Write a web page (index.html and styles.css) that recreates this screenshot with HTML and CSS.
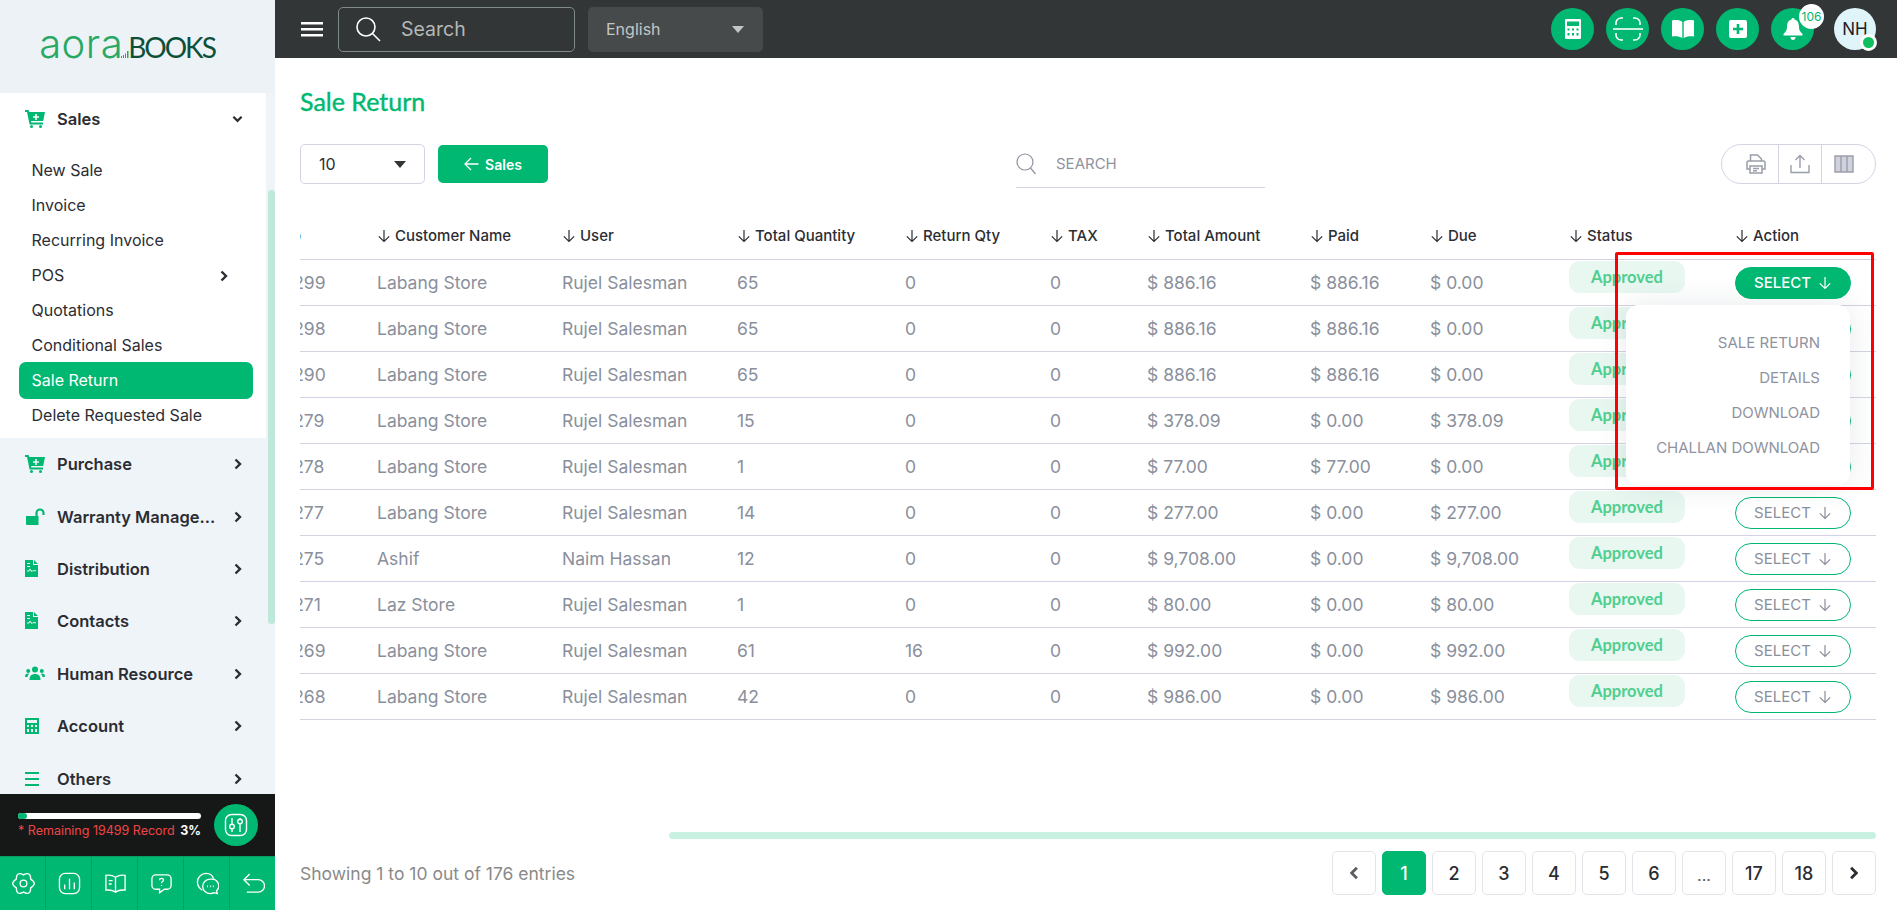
FILE: index.html
```html
<!DOCTYPE html>
<html lang="en">

<head>
    <meta charset="UTF-8">
    <title>Sale Return</title>
    <link rel="stylesheet" href="styles.css">
</head>

<body>
    <svg class="sprites" width="0" height="0">
        <symbol id="i-down" viewBox="0 0 14 14"><path d="M7 1v11.5M1.8 7.3 7 12.5l5.2-5.2" fill="none" stroke="currentColor" stroke-width="1.2"/></symbol>
        <symbol id="i-cart" viewBox="0 0 20 18"><path fill-rule="evenodd" d="M0 0h3.6l.5 2H20l-1.8 9H6l.3 1.6H18v2H4.6L2 2H0zM10.2 4v2.2H8v1.6h2.2V10h1.6V7.8H14V6.2h-2.2V4z"/><circle cx="6.5" cy="16.5" r="1.5"/><circle cx="15.5" cy="16.5" r="1.5"/></symbol>
        <symbol id="i-doc" viewBox="0 0 13 17"><path fill-rule="evenodd" d="M0 0h8v5h5v12H0zM2 3v1h3V3zM2 6v1h3V6zM2 11.5h2l1-1.5 1.5 2 1-.8H11v-.9H8l-1 .6L5 8.500 3.500 10.600H2z"/><path d="M9 0l4 4H9z"/></symbol>
        <symbol id="i-right" viewBox="0 0 8 12"><path d="M1.500 1.500 6 6l-4.500 4.500" fill="none" stroke="currentColor" stroke-width="2.400"/></symbol>
    </svg>

    <aside class="sidebar">
        <div class="logo"><span class="logo-a">aora</span><svg class="logo-bars" width="8" height="7" viewBox="0 0 8 7"><path d="M0 5h1v2H0zM2 4h1v3H2zM4 2.500h1V7H4zM6 0h1.500v7H6z"/></svg><span class="logo-b">BOOKS</span></div>
        <nav class="menu">
            <div class="menu-open">
                <a class="menu-item">
                    <svg class="menu-icon" viewBox="0 0 20 18"><use href="#i-cart"/></svg>
                    <span class="menu-label">Sales</span>
                    <svg class="chev-down" viewBox="0 0 12 8"><path d="M1.500 1.500 6 6l4.500-4.500" fill="none" stroke="currentColor" stroke-width="2.400"/></svg>
                </a>
                <ul class="submenu">
                    <li>New Sale</li>
                    <li>Invoice</li>
                    <li>Recurring Invoice</li>
                    <li class="has-sub">POS <svg class="chev" viewBox="0 0 8 12"><use href="#i-right"/></svg></li>
                    <li>Quotations</li>
                    <li>Conditional Sales</li>
                    <li class="active">Sale Return</li>
                    <li>Delete Requested Sale</li>
                </ul>
            </div>
            <a class="menu-item">
                <svg class="menu-icon" viewBox="0 0 20 18"><use href="#i-cart"/></svg>
                <span class="menu-label">Purchase</span>
                <svg class="chev" viewBox="0 0 8 12"><use href="#i-right"/></svg>
            </a>
            <a class="menu-item">
                <svg class="menu-icon" viewBox="0 0 20 18"><path d="M1 8h12.500v9H2a1 1 0 0 1-1-1z"/><path d="M11.500 8V5a3.500 3.500 0 0 1 7 0v2" fill="none" stroke="currentColor" stroke-width="2.200"/></svg>
                <span class="menu-label">Warranty Manage...</span>
                <svg class="chev" viewBox="0 0 8 12"><use href="#i-right"/></svg>
            </a>
            <a class="menu-item">
                <svg class="menu-icon" viewBox="0 0 20 18"><use href="#i-doc" width="13" height="17"/></svg>
                <span class="menu-label">Distribution</span>
                <svg class="chev" viewBox="0 0 8 12"><use href="#i-right"/></svg>
            </a>
            <a class="menu-item">
                <svg class="menu-icon" viewBox="0 0 20 18"><use href="#i-doc" width="13" height="17"/></svg>
                <span class="menu-label">Contacts</span>
                <svg class="chev" viewBox="0 0 8 12"><use href="#i-right"/></svg>
            </a>
            <a class="menu-item">
                <svg class="menu-icon" viewBox="0 0 20 18"><circle cx="10" cy="4.500" r="3"/><circle cx="3.200" cy="6" r="2"/><circle cx="16.800" cy="6" r="2"/><path d="M4.500 15c0-4 2-6 5.500-6s5.500 2 5.500 6zM0 12c0-2.500 1-3.500 3-3.500l1 .5c-1 1-1.500 2-1.500 3zM20 12c0-2.500-1-3.500-3-3.500l-1 .5c1 1 1.500 2 1.500 3z"/></svg>
                <span class="menu-label">Human Resource</span>
                <svg class="chev" viewBox="0 0 8 12"><use href="#i-right"/></svg>
            </a>
            <a class="menu-item">
                <svg class="menu-icon" viewBox="0 0 20 18"><path fill-rule="evenodd" d="M0 1h14v16H0zM2 3v3h10V3zM2 8v2h2V8zM6 8v2h2V8zM10 8v2h2V8zM2 12v3h2v-3zM6 12v3h2v-3zM10 12v3h2v-3z"/></svg>
                <span class="menu-label">Account</span>
                <svg class="chev" viewBox="0 0 8 12"><use href="#i-right"/></svg>
            </a>
            <a class="menu-item">
                <svg class="menu-icon" viewBox="0 0 20 18"><path d="M0 2h14v2H0zM0 8h14v2H0zM0 14h14v2H0z"/></svg>
                <span class="menu-label">Others</span>
                <svg class="chev" viewBox="0 0 8 12"><use href="#i-right"/></svg>
            </a>
        </nav>
        <div class="thumb"></div>

        <div class="usage">
            <div class="usage-info">
                <div class="usage-bar"><div class="usage-fill" style="width: 5%"></div></div>
                <div class="usage-text"><span class="usage-red">* Remaining 19499 Record</span><span class="usage-pct">3%</span></div>
            </div>
            <div class="usage-btn">
                <svg width="24" height="24" viewBox="0 0 24 24" fill="none" stroke="#fff" stroke-width="1.400"><rect x="1.500" y="1.500" width="21" height="21" rx="6"/><path d="M8 5v6M8 16v3M16 5v1M16 11v8"/><circle cx="8" cy="13.500" r="2.300"/><circle cx="16" cy="8.500" r="2.300"/></svg>
            </div>
        </div>
        <div class="quick">
            <div class="quick-cell"><svg viewBox="0 0 24 24"><path d="M19.500 7.500Q27 12 19.500 16.500Q19.500 25 12 21Q4.500 25 4.500 16.500Q-3 12 4.500 7.500Q4.500-1 12 3Q19.500-1 19.500 7.500z"/><circle cx="12" cy="12" r="3.500"/></svg></div>
            <div class="quick-cell"><svg viewBox="0 0 24 24"><rect x="1.500" y="1.500" width="21" height="21" rx="6"/><path d="M7 13v5M12 7v11M17 11v7"/></svg></div>
            <div class="quick-cell"><svg viewBox="0 0 24 24"><path d="M12 5.500C9 3.500 5 3 2 3.500v15.500c3.500-.5 7 0 10 2 3-2 6.500-2.500 10-2V3.500c-3-.5-7 0-10 2zM12 5.500V21M5 9h4M5 12.500h3"/></svg></div>
            <div class="quick-cell"><svg viewBox="0 0 24 24"><path d="M6 3h12a4 4 0 0 1 4 4v7a4 4 0 0 1-4 4h-3l-5 3.500V18H6a4 4 0 0 1-4-4V7a4 4 0 0 1 4-4z"/><path d="M10 8.500c0-2.500 4-2.500 4 0 0 1.500-2 1.500-2 3.200M12 13.500v1.200"/></svg></div>
            <div class="quick-cell"><svg viewBox="0 0 24 24"><path d="M6.500 19C3.500 17 1.500 14 1.500 10.500 1.500 5.500 5.500 1.500 10.500 1.500c4 0 7 2.500 8 6"/><path d="M15 7.500a7.500 7 0 0 0 0 15c1.500 0 3-.3 4-.9l3.200.9-.8-3a7.500 7 0 0 0-6.400-12z"/><path d="M11.500 15h1M14.500 15h1M17.500 15h1" stroke-width="1.800"/></svg></div>
            <div class="quick-cell"><svg viewBox="0 0 24 24"><path d="M8 2 2 8l6 6M2 8h15a5.500 5.500 0 0 1 0 13H5"/></svg></div>
        </div>
    </aside>

    <div class="page">
        <header class="topbar">
            <svg class="burger" viewBox="0 0 22 16"><path d="M0 1h22v2.600H0zM0 7h22v2.600H0zM0 13h22v2.600H0z"/></svg>
            <div class="top-search">
                <svg width="26" height="26" viewBox="0 0 26 26" fill="none" stroke="#fff" stroke-width="1.600"><circle cx="11" cy="11" r="9"/><path d="M17.500 17.500 25 25"/></svg>
                <span>Search</span>
            </div>
            <div class="lang"><span>English</span><i class="caret"></i></div>
            <div class="top-actions">
                <div class="round"><svg width="18" height="20" viewBox="0 0 18 20"><path fill="#fff" fill-rule="evenodd" d="M2 0h14a1 1 0 0 1 1 1v18a1 1 0 0 1-1 1H2a1 1 0 0 1-1-1V1a1 1 0 0 1 1-1zM3 2.500V7h12V2.500zM3.500 9.500v2h2v-2zM8 9.500v2h2v-2zM12.500 9.500v2h2v-2zM3.500 14v2.500h2V14zM8 14v2.500h2V14zM12.500 14v2.500h2V14z"/></svg></div>
                <div class="round"><svg width="30" height="26" viewBox="0 0 30 26" fill="none" stroke="#fff" stroke-width="1.600"><path d="M3 9V7a5 5 0 0 1 5-5h2M20 2h2a5 5 0 0 1 5 5v2M3 17v2a5 5 0 0 0 5 5h2M20 24h2a5 5 0 0 0 5-5v-2"/><path d="M0 13h30"/></svg></div>
                <div class="round"><svg width="24" height="20" viewBox="0 0 24 20"><path fill="#fff" d="M1 1.500c4-1 8-.5 10.300 1.500v16C9 17.500 5 17 1 17.500zM23 1.500c-4-1-8-.5-10.300 1.500v16c2.300-1.500 6.300-2 10.300-1.500z"/></svg></div>
                <div class="round"><svg width="18" height="18" viewBox="0 0 18 18"><path fill="#fff" fill-rule="evenodd" d="M2 0h14a2 2 0 0 1 2 2v14a2 2 0 0 1-2 2H2a2 2 0 0 1-2-2V2a2 2 0 0 1 2-2zM7.700 4v3.700H4v2.600h3.700V14h2.600v-3.700H14V7.700h-3.700V4z"/></svg></div>
                <div class="round bell">
                    <svg width="20" height="22" viewBox="0 0 20 22"><path fill="#fff" d="M10 0c1 0 1.500.7 1.500 1.600C15 2.500 16 5.500 16 9c0 3 1 4.500 3.500 7v1.500h-19V16C3 13.500 4 12 4 9c0-3.500 1-6.500 4.500-7.400C8.500.7 9 0 10 0zM7.500 19h5c0 2-1 3-2.500 3s-2.500-1-2.500-3z"/></svg>
                    <span class="badge">106</span>
                </div>
                <div class="avatar">NH<i class="dot"></i></div>
            </div>
        </header>

        <main class="content">
            <h1 class="title">Sale Return</h1>
            <div class="toolbar">
                <div class="per-page"><span>10</span><i class="caret dark"></i></div>
                <a class="btn-back"><svg width="15" height="14" viewBox="0 0 15 14" fill="none" stroke="#fff" stroke-width="1.300"><path d="M14.500 7H1M7 1 1 7l6 6"/></svg>Sales</a>
                <div class="table-search">
                    <svg width="20" height="22" viewBox="0 0 20 22" fill="none" stroke="#8f93a0" stroke-width="1.200"><circle cx="9" cy="9" r="8"/><path d="M14.500 15 19.500 21"/></svg>
                    <span>SEARCH</span>
                </div>
                <div class="table-tools">
                    <div class="tool"><svg width="20" height="20" viewBox="0 0 20 20" fill="none" stroke="#9a9eab" stroke-width="1.500"><path d="M4.500 7V1h7l4 4v2M4 15H1V8.500A1.500 1.500 0 0 1 2.500 7h15A1.500 1.500 0 0 1 19 8.500V15h-3M4 12h12v7H4zM7 14.500h6M7 16.800h4"/></svg></div>
                    <div class="tool"><svg width="20" height="20" viewBox="0 0 20 20" fill="none" stroke="#9a9eab" stroke-width="1.400"><path d="M1 11v7.500h18V11M10 14V1.500M5.500 6 10 1.500 14.500 6"/></svg></div>
                    <div class="tool"><svg width="20" height="18" viewBox="0 0 20 18" fill="#d0d1dc" stroke="#9a9eab" stroke-width="1.400"><path d="M1 1h18v16H1zM7 1v16M13 1v16"/></svg></div>
                </div>
            </div>

            <div class="table-wrap">
                <table class="data">
                    <thead>
                        <tr>
                            <th class="col-no">No</th>
                            <th class="col-customer"><svg class="arrow"><use href="#i-down"/></svg> Customer Name</th>
                            <th class="col-user"><svg class="arrow"><use href="#i-down"/></svg> User</th>
                            <th class="col-qty"><svg class="arrow"><use href="#i-down"/></svg> Total Quantity</th>
                            <th class="col-return"><svg class="arrow"><use href="#i-down"/></svg> Return Qty</th>
                            <th class="col-tax"><svg class="arrow"><use href="#i-down"/></svg> TAX</th>
                            <th class="col-amount"><svg class="arrow"><use href="#i-down"/></svg> Total Amount</th>
                            <th class="col-paid"><svg class="arrow"><use href="#i-down"/></svg> Paid</th>
                            <th class="col-due"><svg class="arrow"><use href="#i-down"/></svg> Due</th>
                            <th class="col-status"><svg class="arrow"><use href="#i-down"/></svg> Status</th>
                            <th class="col-action"><svg class="arrow"><use href="#i-down"/></svg> Action</th>
                        </tr>
                    </thead>
                    <tbody>
                        <tr>
                            <td class="col-no">10299</td><td>Labang Store</td><td>Rujel Salesman</td><td>65</td><td>0</td><td>0</td><td>$ 886.16</td><td>$ 886.16</td><td>$ 0.00</td>
                            <td class="cell-status"><span class="pill">Approved</span></td>
                            <td class="cell-action">
                                <a class="select on">SELECT <svg class="arrow"><use href="#i-down"/></svg></a>
                                <div class="dropdown">
                                    <div>SALE RETURN</div>
                                    <div>DETAILS</div>
                                    <div>DOWNLOAD</div>
                                    <div>CHALLAN DOWNLOAD</div>
                                </div>
                                <div class="red-box"></div>
                            </td>
                        </tr>
                        <tr>
                            <td class="col-no">10298</td><td>Labang Store</td><td>Rujel Salesman</td><td>65</td><td>0</td><td>0</td><td>$ 886.16</td><td>$ 886.16</td><td>$ 0.00</td>
                            <td class="cell-status"><span class="pill">Approved</span></td>
                            <td class="cell-action"><a class="select">SELECT <svg class="arrow"><use href="#i-down"/></svg></a></td>
                        </tr>
                        <tr>
                            <td class="col-no">10290</td><td>Labang Store</td><td>Rujel Salesman</td><td>65</td><td>0</td><td>0</td><td>$ 886.16</td><td>$ 886.16</td><td>$ 0.00</td>
                            <td class="cell-status"><span class="pill">Approved</span></td>
                            <td class="cell-action"><a class="select">SELECT <svg class="arrow"><use href="#i-down"/></svg></a></td>
                        </tr>
                        <tr>
                            <td class="col-no">10279</td><td>Labang Store</td><td>Rujel Salesman</td><td>15</td><td>0</td><td>0</td><td>$ 378.09</td><td>$ 0.00</td><td>$ 378.09</td>
                            <td class="cell-status"><span class="pill">Approved</span></td>
                            <td class="cell-action"><a class="select">SELECT <svg class="arrow"><use href="#i-down"/></svg></a></td>
                        </tr>
                        <tr>
                            <td class="col-no">10278</td><td>Labang Store</td><td>Rujel Salesman</td><td>1</td><td>0</td><td>0</td><td>$ 77.00</td><td>$ 77.00</td><td>$ 0.00</td>
                            <td class="cell-status"><span class="pill">Approved</span></td>
                            <td class="cell-action"><a class="select">SELECT <svg class="arrow"><use href="#i-down"/></svg></a></td>
                        </tr>
                        <tr>
                            <td class="col-no">10277</td><td>Labang Store</td><td>Rujel Salesman</td><td>14</td><td>0</td><td>0</td><td>$ 277.00</td><td>$ 0.00</td><td>$ 277.00</td>
                            <td class="cell-status"><span class="pill">Approved</span></td>
                            <td class="cell-action"><a class="select">SELECT <svg class="arrow"><use href="#i-down"/></svg></a></td>
                        </tr>
                        <tr>
                            <td class="col-no">10275</td><td>Ashif</td><td>Naim Hassan</td><td>12</td><td>0</td><td>0</td><td>$ 9,708.00</td><td>$ 0.00</td><td>$ 9,708.00</td>
                            <td class="cell-status"><span class="pill">Approved</span></td>
                            <td class="cell-action"><a class="select">SELECT <svg class="arrow"><use href="#i-down"/></svg></a></td>
                        </tr>
                        <tr>
                            <td class="col-no">10271</td><td>Laz Store</td><td>Rujel Salesman</td><td>1</td><td>0</td><td>0</td><td>$ 80.00</td><td>$ 0.00</td><td>$ 80.00</td>
                            <td class="cell-status"><span class="pill">Approved</span></td>
                            <td class="cell-action"><a class="select">SELECT <svg class="arrow"><use href="#i-down"/></svg></a></td>
                        </tr>
                        <tr>
                            <td class="col-no">10269</td><td>Labang Store</td><td>Rujel Salesman</td><td>61</td><td>16</td><td>0</td><td>$ 992.00</td><td>$ 0.00</td><td>$ 992.00</td>
                            <td class="cell-status"><span class="pill">Approved</span></td>
                            <td class="cell-action"><a class="select">SELECT <svg class="arrow"><use href="#i-down"/></svg></a></td>
                        </tr>
                        <tr>
                            <td class="col-no">10268</td><td>Labang Store</td><td>Rujel Salesman</td><td>42</td><td>0</td><td>0</td><td>$ 986.00</td><td>$ 0.00</td><td>$ 986.00</td>
                            <td class="cell-status"><span class="pill">Approved</span></td>
                            <td class="cell-action"><a class="select">SELECT <svg class="arrow"><use href="#i-down"/></svg></a></td>
                        </tr>
                    </tbody>
                </table>
            </div>

            <div class="h-scroll"></div>
            <div class="table-foot">
                <div class="entries">Showing 1 to 10 out of 176 entries</div>
                <div class="pager">
                    <a class="prev"><svg width="10" height="14" viewBox="0 0 8 12"><path d="M6.500 1.500 2 6l4.500 4.500" fill="none" stroke="currentColor" stroke-width="2.400"/></svg></a>
                    <a class="current">1</a>
                    <a>2</a>
                    <a>3</a>
                    <a>4</a>
                    <a>5</a>
                    <a>6</a>
                    <a class="dots">...</a>
                    <a>17</a>
                    <a>18</a>
                    <a><svg width="10" height="14" viewBox="0 0 8 12"><use href="#i-right"/></svg></a>
                </div>
            </div>
        </main>
    </div>
</body>

</html>
```

FILE: styles.css
```css
html,
body {
    margin: 0;
    padding: 0;
    height: 100%;
    overflow: hidden;
}

body {
    display: flex;
    font-family: "Inter", "Liberation Sans", sans-serif;
    color: #2b2d33;
    background: #fff;
}

.sprites {
    position: absolute;
}

/* Sidebar */
.sidebar {
    position: relative;
    width: 275px;
    height: 910px;
    flex: none;
    display: flex;
    flex-direction: column;
    background: #eff4f9;
}

.logo {
    height: 93px;
    flex: none;
    display: flex;
    align-items: baseline;
    justify-content: center;
    padding-right: 21px;
    box-sizing: border-box;
    line-height: 88px;
    background: #edf2f7;
}

.logo-a {
    color: #27a863;
    font-family: "Inter", sans-serif;
    font-weight: 300;
    font-size: 40px;
    letter-spacing: 0.5px;
}

.logo-bars {
    fill: #27a863;
    margin: 0 -1px 0 -2px;
}

.logo-b {
    color: #0d4f38;
    font-family: "Lato", sans-serif;
    font-weight: 400;
    font-size: 28px;
    letter-spacing: -2px;
}

.menu {
    flex: 1;
    overflow: hidden;
    min-height: 0;
}

.menu-open {
    width: 266px;
    height: 345px;
    background: #fff;
}

.menu-item {
    display: flex;
    align-items: center;
    height: 52.4px;
    padding: 0 25px;
    font-size: 16.5px;
    font-weight: 600;
    color: #2b2d33;
}

.menu-open .menu-item {
    height: 52px;
}

.menu-icon {
    width: 20px;
    height: 18px;
    flex: none;
    margin-right: 12px;
    fill: #00b871;
    color: #00b871;
}

.menu-label {
    flex: 1;
    white-space: nowrap;
}

.chev {
    width: 8px;
    height: 12px;
    flex: none;
    color: #2b2d33;
}

.chev-down {
    width: 11px;
    height: 8px;
    margin-right: -2px;
    color: #2b2d33;
}

.menu > .menu-item {
    padding-right: 33px;
}

.submenu {
    list-style: none;
    margin: 0;
    padding: 8px 0 0;
}

.submenu li {
    height: 35px;
    line-height: 35px;
    margin: 0 13px 0 19px;
    padding-left: 12.5px;
    font-size: 16px;
    border-radius: 7px;
    display: flex;
    align-items: center;
}

.submenu .has-sub {
    justify-content: space-between;
    padding-right: 25px;
}

.submenu .active {
    background: #00b871;
    color: #fff;
    height: 37px;
    margin-top: -1px;
    margin-bottom: -1px;
}

.thumb {
    position: absolute;
    top: 190px;
    right: 0;
    width: 7px;
    height: 434px;
    border-radius: 4px;
    background: #bee8da;
}

.usage {
    height: 62px;
    flex: none;
    display: flex;
    align-items: center;
    justify-content: space-between;
    padding: 0 17px 0 18px;
    background: #161818;
}

.usage-info {
    width: 183px;
}

.usage-bar {
    height: 6px;
    border-radius: 3px;
    background: #fff;
}

.usage-fill {
    height: 6px;
    border-radius: 3px;
    background: #00b871;
}

.usage-text {
    display: flex;
    justify-content: space-between;
    margin-top: 4px;
    font-size: 12.5px;
    white-space: nowrap;
}

.usage-red {
    color: #f04545;
}

.usage-pct {
    color: #fff;
    font-weight: 700;
}

.usage-btn {
    width: 44px;
    height: 42px;
    border-radius: 50%;
    display: flex;
    align-items: center;
    justify-content: center;
    background: #00b871;
}

.quick {
    height: 54px;
    flex: none;
    display: flex;
    background: #00b871;
    border-top: 1px solid #0a9a62;
    box-sizing: border-box;
}

.quick-cell {
    flex: 1;
    display: flex;
    align-items: center;
    justify-content: center;
    padding-left: 2px;
    border-right: 1px solid #0a9a62;
}

.quick-cell:last-child {
    border-right: 0;
}

.quick-cell svg {
    width: 23px;
    height: 23px;
    fill: none;
    stroke: #fff;
    stroke-width: 1.4;
}

/* Top bar */
.page {
    flex: 1;
    min-width: 0;
    display: flex;
    flex-direction: column;
}

.topbar {
    height: 58px;
    flex: none;
    display: flex;
    align-items: center;
    padding: 0 21px 0 26px;
    background: #323636;
}

.burger {
    width: 22px;
    height: 16px;
    fill: #fff;
    margin-right: 15px;
}

.top-search {
    width: 237px;
    height: 45px;
    box-sizing: border-box;
    display: flex;
    align-items: center;
    gap: 20px;
    padding-left: 16px;
    margin-right: 13px;
    border: 1px solid #7f8b86;
    border-radius: 5px;
    font-size: 19.5px;
    color: #b4b8b6;
}

.lang {
    width: 175px;
    height: 45px;
    box-sizing: border-box;
    display: flex;
    align-items: center;
    justify-content: space-between;
    padding: 0 19px 0 18px;
    border-radius: 5px;
    background: #474a4a;
    color: #c3c6c5;
    font-size: 16px;
}

.caret {
    width: 0;
    height: 0;
    border-left: 6.5px solid transparent;
    border-right: 6.5px solid transparent;
    border-top: 7px solid #c3c6c5;
}

.caret.dark {
    border-top-color: #323636;
}

.top-actions {
    margin-left: auto;
    display: flex;
    align-items: center;
}

.round {
    position: relative;
    width: 43px;
    height: 42px;
    margin-right: 12px;
    border-radius: 50%;
    display: flex;
    align-items: center;
    justify-content: center;
    background: #00b871;
}

.bell {
    margin-right: 20px;
}

.badge {
    position: absolute;
    top: -4px;
    right: -10px;
    width: 25px;
    height: 25px;
    border-radius: 50%;
    display: flex;
    align-items: center;
    justify-content: center;
    background: #fff;
    color: #00b871;
    font-size: 12px;
}

.avatar {
    position: relative;
    width: 42px;
    height: 42px;
    border-radius: 50%;
    display: flex;
    align-items: center;
    justify-content: center;
    background: #dff5f9;
    color: #1f2024;
    font-size: 17px;
}

.dot {
    position: absolute;
    right: -1px;
    bottom: -1px;
    width: 11px;
    height: 11px;
    border: 3px solid #fff;
    border-radius: 50%;
    background: #0fbe5f;
}

/* Content */
.content {
    flex: 1;
    min-height: 0;
    padding: 0 21px 0 25px;
    display: flex;
    flex-direction: column;
}

.title {
    margin: 28px 0 0;
    height: 30px;
    line-height: 30px;
    font-family: "Lato", sans-serif;
    font-size: 25px;
    font-weight: 400;
    -webkit-text-stroke: 0.4px #00b871;
    color: #00b871;
}

.toolbar {
    display: flex;
    align-items: center;
    margin-top: 28px;
    height: 40px;
}

.per-page {
    width: 125px;
    height: 40px;
    box-sizing: border-box;
    display: flex;
    align-items: center;
    justify-content: space-between;
    padding: 0 18px;
    margin-right: 13px;
    border: 1px solid #d5d3e3;
    border-radius: 5px;
    font-size: 16px;
}

.btn-back {
    width: 110px;
    height: 38px;
    display: flex;
    align-items: center;
    justify-content: center;
    gap: 6px;
    border-radius: 5px;
    background: #00b871;
    color: #fff;
    font-size: 14px;
    font-weight: 600;
}

.table-search {
    width: 249px;
    height: 44px;
    margin: 4px 0 0 468px;
    box-sizing: border-box;
    display: flex;
    align-items: center;
    gap: 20px;
    border-bottom: 1px solid #d5d3e3;
    padding-bottom: 4px;
    color: #8f93a0;
    font-size: 15px;
}

.table-tools {
    margin-left: auto;
    height: 40px;
    width: 155px;
    box-sizing: border-box;
    display: flex;
    border: 1px solid #d5d3e3;
    border-radius: 20px;
}

.tool {
    width: 43px;
    box-sizing: border-box;
    display: flex;
    align-items: center;
    justify-content: center;
    border-left: 1px solid #d5d3e3;
}

.tool:first-child {
    width: 56px;
    padding-left: 12px;
    border-left: 0;
}

.tool:last-child {
    flex: 1;
    justify-content: flex-start;
    padding-left: 12px;
}

/* Table */
.table-wrap {
    margin-top: 31px;
    height: 617px;
    overflow: hidden;
    flex: none;
}

.data {
    table-layout: fixed;
    border-collapse: collapse;
    width: 1616px;
    margin-left: -40px;
    font-size: 17.5px;
}

.data th {
    height: 44px;
    box-sizing: border-box;
    padding: 0 0 3px;
    text-align: left;
    font-size: 15px;
    font-weight: 500;
    color: #2b2d33;
    white-space: nowrap;
}

.data thead tr {
    border-bottom: 1px solid #d5d3e3;
}

.data tbody tr {
    border-bottom: 1px solid #d5d3e3;
}

.data td {
    height: 46px;
    box-sizing: border-box;
    padding: 0;
    color: #8a8f9c;
    white-space: nowrap;
}

.data .col-no {
    width: 117px;
}

.data th.col-no {
    padding-right: 76px;
    text-align: right;
}

.data td.col-no {
    padding-left: 15px;
}

.col-customer { width: 185px; }
.col-user { width: 175px; }
.col-qty { width: 168px; }
.col-return { width: 145px; }
.col-tax { width: 97px; }
.col-amount { width: 163px; }
.col-paid { width: 120px; }
.col-due { width: 139px; }
.col-status { width: 166px; }
.col-action { width: 141px; }

.arrow {
    width: 14px;
    height: 14px;
    vertical-align: -2px;
}

.data td.cell-status {
    vertical-align: top;
    padding-top: 1px;
}

.pill {
    display: block;
    width: 116px;
    height: 32px;
    line-height: 32px;
    text-align: center;
    border-radius: 11px;
    background: #e9f7f1;
    color: #4fcf8f;
    font-family: "Lato", sans-serif;
    font-size: 16.5px;
    font-weight: 700;
}

.cell-action {
    position: relative;
}

.select {
    display: flex;
    align-items: center;
    justify-content: center;
    gap: 7px;
    width: 116px;
    height: 32px;
    margin-top: 1px;
    box-sizing: border-box;
    border: 1px solid #00b871;
    border-radius: 16px;
    color: #8a8f9c;
    background: #fff;
    font-size: 15px;
}

.select.on {
    background: #00b871;
    color: #fff;
    font-weight: 500;
}

.dropdown {
    position: absolute;
    top: 45px;
    left: -109px;
    z-index: 2;
    width: 224px;
    height: 180px;
    box-sizing: border-box;
    padding: 20px 30px 0 0;
    border-radius: 12px;
    background: #fff;
    box-shadow: 0 0 30px rgba(60, 70, 90, 0.12);
    text-align: right;
    font-size: 15px;
    color: #8f93a0;
}

.dropdown div {
    height: 35px;
    line-height: 35px;
}

.red-box {
    position: absolute;
    top: -8px;
    left: -120px;
    z-index: 3;
    width: 259px;
    height: 238px;
    box-sizing: border-box;
    border: 3.5px solid #f00;
    border-radius: 2px;
}

/* Footer of table */
.h-scroll {
    flex: none;
    height: 7px;
    margin: 0 0 0 369px;
    border-radius: 4px;
    background: #c9f1e1;
}

.table-foot {
    flex: none;
    margin-top: 12px;
    display: flex;
    align-items: center;
    justify-content: space-between;
}

.entries {
    font-size: 17.5px;
    color: #8a8a8a;
}

.pager {
    display: flex;
    gap: 6px;
}

.pager a {
    width: 44px;
    height: 44px;
    box-sizing: border-box;
    display: flex;
    align-items: center;
    justify-content: center;
    border: 1px solid #e2e4ea;
    border-radius: 5px;
    font-size: 18px;
    font-weight: 500;
    color: #2b2d33;
}

.pager .current {
    background: #00b871;
    border-color: #00b871;
    color: #fff;
}

.pager .prev {
    color: #5b5d63;
}

.pager .dots {
    font-size: 16px;
    font-weight: 400;
    color: #55575d;
    padding-top: 4px;
}
```
